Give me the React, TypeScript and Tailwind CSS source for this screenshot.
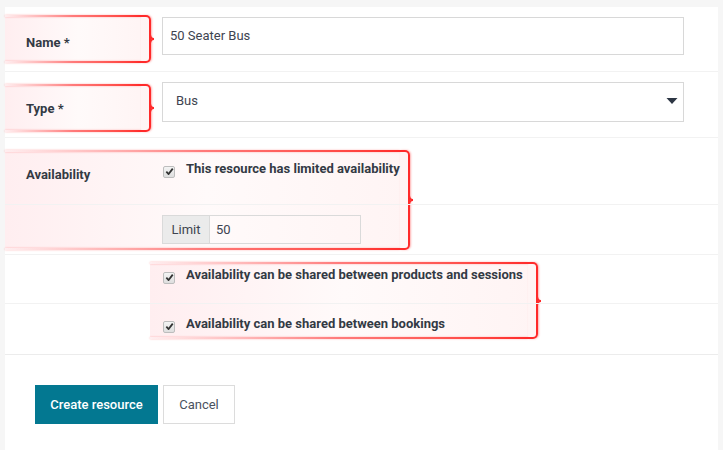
import React from "react";

const font = { fontFamily: "Roboto, 'Liberation Sans', sans-serif" };

function Check() {
  return (
    <span className="inline-flex h-[12px] w-[12px] shrink-0 items-center justify-center rounded-[2px] border border-[#bdbdbd] bg-gradient-to-b from-[#f4f4f4] to-[#dedede]">
      <svg width="9" height="9" viewBox="0 0 10 10">
        <path d="M1.5 5.2 L4 7.8 L8.6 1.8" fill="none" stroke="#333" strokeWidth="2" strokeLinejoin="round" />
      </svg>
    </span>
  );
}

type CalloutProps = { className: string };

// red annotation box that fades in from the left and points right with a brace
function Callout({ className }: CalloutProps) {
  return (
    <div className={`pointer-events-none absolute ${className}`}>
      <div className="absolute inset-0 rounded-r-[5px] bg-gradient-to-r from-[#ffeef0] via-[#fffafa] to-[#fff4f4]" />
      <div className="absolute left-0 right-[10px] top-0 h-[2px] bg-gradient-to-r from-[#ff2a2a00] via-[#ff7a7a] to-[#ff2a2a] shadow-[0_0_2px_rgba(255,60,60,0.4)]" />
      <div className="absolute bottom-0 left-0 right-[10px] h-[2px] bg-gradient-to-r from-[#ff2a2a00] via-[#ff7a7a] to-[#ff2a2a] shadow-[0_0_2px_rgba(255,60,60,0.4)]" />
      <div className="absolute bottom-0 right-0 top-0 w-[10px] rounded-r-[5px] border-2 border-l-0 border-[#ff2a2a] shadow-[1px_0_2px_rgba(255,60,60,0.4)]" />
      <svg className="absolute right-[-4px] top-1/2 -translate-y-1/2" width="6" height="12" viewBox="0 0 6 12">
        <path d="M1 0 Q1 6 5 6 Q1 6 1 12" fill="none" stroke="#ff2a2a" strokeWidth="1.8" />
      </svg>
    </div>
  );
}

export default function App() {
  return (
    <div className="h-[450px] w-[723px] overflow-hidden bg-[#f6f6f6] pl-[5px] pt-[7px]" style={font}>
      <div className="relative h-[443px] w-[713px] bg-white text-[13px] text-[#333a44]">
        <div className="relative z-10">
          {/* Name */}
          <div className="flex h-[65px] border-b border-[#f2f2f2]">
            <div className="w-[157px] pl-[21px] pt-[26px] font-bold">Name *</div>
            <div className="pt-[10px]">
              <div className="flex h-[38px] w-[522px] items-center border border-[#d8d8d8] px-[7px] text-[#3e4450]">50 Seater Bus</div>
            </div>
          </div>

          {/* Type */}
          <div className="flex h-[66px] border-b border-[#f2f2f2]">
            <div className="w-[157px] pl-[21px] pt-[27px] font-bold">Type *</div>
            <div className="pt-[10px]">
              <div className="flex h-[40px] w-[522px] items-center justify-between border border-[#d8d8d8] pl-[13px] pr-[5px] text-[#3e4450]">
                <span className="-mt-[3px]">Bus</span>
                <svg width="12" height="8" viewBox="0 0 12 8" className="-mt-[3px]">
                  <path d="M0.5 1 L11.5 1 L6 7 Z" fill="#2d3644" />
                </svg>
              </div>
            </div>
          </div>

          {/* Availability */}
          <div className="flex h-[67px] border-b border-[#f2f2f2]">
            <div className="w-[157px] pl-[21px] pt-[27px] font-bold">Availability</div>
            <div className="flex items-start gap-[11px] pt-[21px] pl-[1px]">
              <span className="mt-[3px]"><Check /></span>
              <span className="font-bold">This resource has limited availability</span>
            </div>
          </div>

          {/* Limit */}
          <div className="flex h-[50px] border-b border-[#f2f2f2]">
            <div className="w-[157px]" />
            <div className="pt-[10px]">
              <div className="flex h-[29px] w-[199px] border border-[#dadada]">
                <span className="flex w-[47px] items-center justify-center border-r border-[#dadada] bg-[#ebebeb] text-[#3e4450]">Limit</span>
                <span className="flex items-center pl-[6px] text-[#3e4450]">50</span>
              </div>
            </div>
          </div>

          {/* Shared products */}
          <div className="flex h-[49px] border-b border-[#f2f2f2]">
            <div className="w-[157px]" />
            <div className="flex items-start gap-[11px] pt-[10px] pl-[1px]">
              <span className="mt-[3px]"><Check /></span>
              <span className="font-bold">Availability can be shared between products and sessions</span>
            </div>
          </div>

          {/* Shared bookings */}
          <div className="flex h-[51px] border-b border-[#ececec]">
            <div className="w-[157px]" />
            <div className="flex items-start gap-[11px] pt-[10px] pl-[1px]">
              <span className="mt-[3px]"><Check /></span>
              <span className="font-bold">Availability can be shared between bookings</span>
            </div>
          </div>

          {/* Actions */}
          <div className="flex gap-[5px] pl-[30px] pt-[30px]">
            <button className="h-[39px] w-[123px] bg-[#037891] font-medium text-white">Create resource</button>
            <button className="h-[39px] w-[72px] border border-[#dcdcdc] bg-white text-[#4a5260]">Cancel</button>
          </div>
        </div>

        <Callout className="left-0 top-[8px] h-[48px] w-[146px] z-0" />
        <Callout className="left-0 top-[77px] h-[48px] w-[146px] z-0" />
        <Callout className="left-0 top-[143px] h-[100px] w-[405px] z-0" />
        <Callout className="left-[145px] top-[255px] h-[77px] w-[388px] z-0" />
      </div>
    </div>
  );
}
